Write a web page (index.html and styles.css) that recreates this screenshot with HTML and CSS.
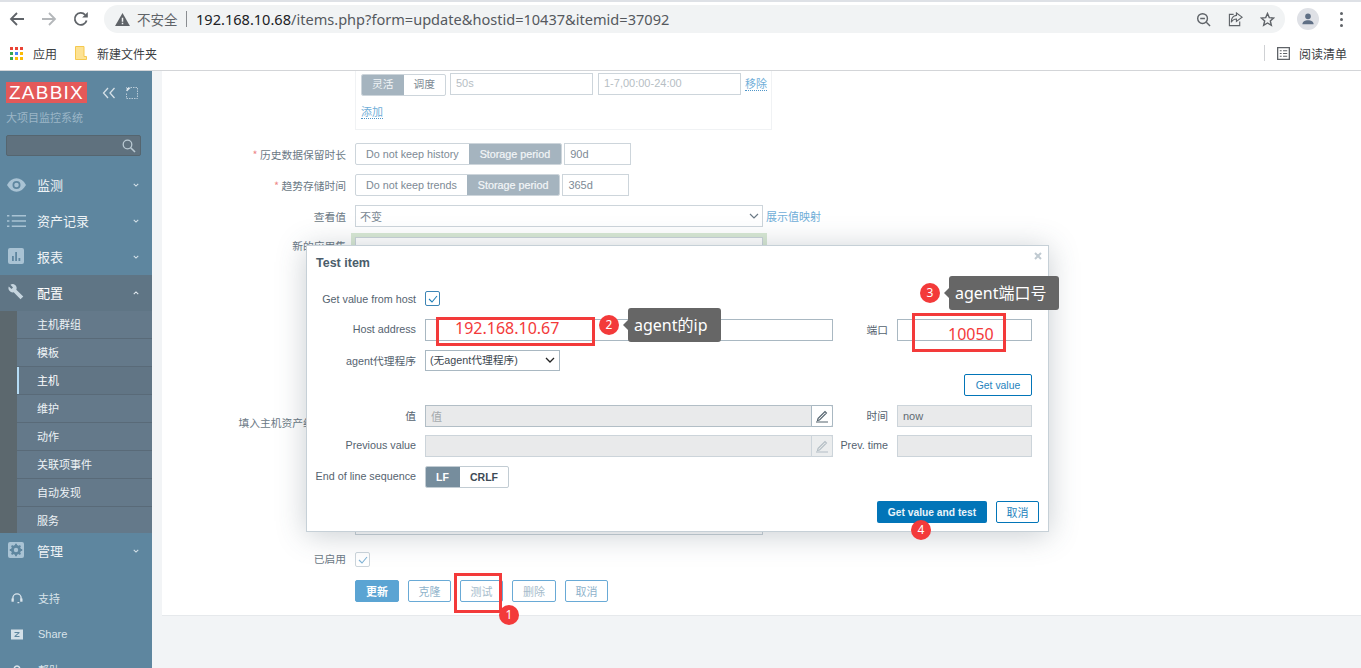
FILE: index.html
```html
<!DOCTYPE html>
<html lang="zh">
<head>
<meta charset="utf-8">
<title>Zabbix</title>
<link rel="stylesheet" href="styles.css">
</head>
<body>
<header class="chrome">
  <div class="toolbar">
    <svg class="nav" viewBox="0 0 16 16"><path d="M15 8H2.5M8 2 2 8l6 6" fill="none" stroke="#5f6368" stroke-width="1.8"/></svg>
    <svg class="nav" viewBox="0 0 16 16"><path d="M1 8h12.5M8 2l6 6-6 6" fill="none" stroke="#b4b7ba" stroke-width="1.8"/></svg>
    <svg class="nav" viewBox="0 0 16 16"><path d="M13.6 9.5A6 6 0 1 1 12.2 3.8" fill="none" stroke="#5f6368" stroke-width="1.8"/><path d="M14.8 1v5.6H9.2z" fill="#5f6368"/></svg>
    <div class="omnibox">
      <svg class="warn" viewBox="0 0 16 14"><path d="M8 0l8 14H0z" fill="#5f6368"/><path d="M7.2 5h1.6v4.4H7.2zM7.2 10.4h1.6V12H7.2z" fill="#f1f3f4"/></svg>
      <span class="insecure">不安全</span>
      <span class="omni-sep"></span>
      <span class="url">192.168.10.68<span class="url-path">/items.php?form=update&amp;hostid=10437&amp;itemid=37092</span></span>
      <div class="omni-icons">
        <svg viewBox="0 0 16 16"><circle cx="7" cy="7" r="5.2" fill="none" stroke="#5f6368" stroke-width="1.5"/><path d="M4.5 7h5M11 11l4 4" stroke="#5f6368" stroke-width="1.5"/></svg>
        <svg viewBox="0 0 16 16"><path d="M9 1l6 4.5L9 10V7.500C6 7.500 4.500 9 3.500 11 3.500 7 5.500 4 9 3.600z" fill="none" stroke="#5f6368" stroke-width="1.2"/><path d="M6 2.500H1.500v12h11V10" fill="none" stroke="#5f6368" stroke-width="1.2"/></svg>
        <svg viewBox="0 0 16 16"><path d="M8 1.600l1.900 4.400 4.700.4-3.600 3.100 1.100 4.700L8 11.700l-4.100 2.500L5 9.500 1.400 6.400l4.700-.4z" fill="none" stroke="#5f6368" stroke-width="1.5"/></svg>
      </div>
    </div>
    <div class="avatar"><svg viewBox="0 0 16 16"><circle cx="8" cy="5" r="3.2" fill="#5f6f85"/><path d="M1.600 14c0-3.200 3-4.600 6.400-4.600s6.400 1.400 6.400 4.600z" fill="#5f6f85"/></svg></div>
    <div class="kebab"><i></i><i></i><i></i></div>
  </div>
  <div class="bookmarks">
    <svg class="apps" viewBox="0 0 13 13">
      <rect width="3" height="3" fill="#ea4335"/><rect x="5" width="3" height="3" fill="#ea4335"/><rect x="10" width="3" height="3" fill="#ea4335"/>
      <rect y="5" width="3" height="3" fill="#34a853"/><rect x="5" y="5" width="3" height="3" fill="#4285f4"/><rect x="10" y="5" width="3" height="3" fill="#fbbc05"/>
      <rect y="10" width="3" height="3" fill="#34a853"/><rect x="5" y="10" width="3" height="3" fill="#fbbc05"/><rect x="10" y="10" width="3" height="3" fill="#fbbc05"/>
    </svg>
    <span class="bm-text">应用</span>
    <svg class="folder" viewBox="0 0 12 14"><path d="M.5.5h8.5v10h2.500v3H.5z" fill="#fde293" stroke="#f5c94f"/></svg>
    <span class="bm-text">新建文件夹</span>
    <span class="bm-spacer"></span>
    <span class="bm-sep"></span>
    <svg class="reading" viewBox="0 0 14 14"><path d="M.7.7h12.600v12.600H.7z" fill="none" stroke="#5f6368" stroke-width="1.400"/><path d="M3 4h2M6.500 4H11M3 7h2M6.500 7H11M3 10h2M6.500 10H11" stroke="#5f6368" stroke-width="1.200"/></svg>
    <span class="bm-text">阅读清单</span>
  </div>
</header>

<div class="app">
  <nav class="sidebar">
    <div class="brand">
      <span class="logo">ZABBIX</span>
      <svg class="brand-ico" viewBox="0 0 14 12"><path d="M6 1 1.500 6 6 11M12.500 1 8 6l4.500 5" fill="none" stroke="#d5e0e7" stroke-width="1.300"/></svg>
      <svg class="brand-ico2" viewBox="0 0 12 12"><path d="M.5 4V.5h11v11H.5V6" fill="none" stroke="#b8cad6" stroke-dasharray="1.500 1"/><path d="M1 1h3.500L1 4.500z" fill="#dce5eb"/></svg>
    </div>
    <div class="brand-sub">大项目监控系统</div>
    <div class="search"><svg viewBox="0 0 14 14"><circle cx="5.500" cy="5.500" r="4.300" fill="none" stroke="#b9c9d3" stroke-width="1.300"/><path d="M8.700 8.700 13 13" stroke="#b9c9d3" stroke-width="1.600"/></svg></div>
    <ul class="menu">
      <li class="mi">
        <svg class="mi-ico" viewBox="0 0 20 14"><path d="M0 7c2.500-4.500 6-7 10-7s7.500 2.500 10 7c-2.500 4.500-6 7-10 7S2.500 11.500 0 7z" fill="#a9c3d4"/><circle cx="10" cy="7" r="4.200" fill="#5e869f"/><circle cx="10" cy="7" r="2.400" fill="#a9c3d4"/></svg>
        <span>监测</span><svg class="chev" viewBox="0 0 8 5"><path d="M1 1l3 3 3-3" fill="none" stroke="#d3e0e8" stroke-width="1.400"/></svg>
      </li>
      <li class="mi">
        <svg class="mi-ico" viewBox="0 0 16 11"><path d="M0 1h2M4 1h12M0 5.500h2M4 5.500h12M0 10h2M4 10h12" stroke="#a9c3d4" stroke-width="1.300"/></svg>
        <span>资产记录</span><svg class="chev" viewBox="0 0 8 5"><path d="M1 1l3 3 3-3" fill="none" stroke="#d3e0e8" stroke-width="1.400"/></svg>
      </li>
      <li class="mi">
        <svg class="mi-ico sq" viewBox="0 0 16 16"><rect width="16" height="16" rx="2" fill="#a9c3d4"/><path d="M4 8h1.800v5H4zM7.200 4h1.800v9H7.200zM10.500 10h1.800v3h-1.800z" fill="#5e869f"/></svg>
        <span>报表</span><svg class="chev" viewBox="0 0 8 5"><path d="M1 1l3 3 3-3" fill="none" stroke="#d3e0e8" stroke-width="1.400"/></svg>
      </li>
      <li class="mi mi-open">
        <svg class="mi-ico sq" viewBox="0 0 16 16"><path d="M6 .3a4.300 4.300 0 0 0-3.600 .5L5 3.500 3.500 5 .8 2.400A4.300 4.300 0 0 0 5.700 8.300l6.800 7 2.800-2.800-7-6.800A4.300 4.300 0 0 0 6 .3z" fill="#c6d5df"/></svg>
        <span>配置</span><svg class="chev" viewBox="0 0 8 5"><path d="M1 4l3-3 3 3" fill="none" stroke="#e2eaef" stroke-width="1.400"/></svg>
      </li>
      <li class="submenu">
        <ul>
          <li>主机群组</li>
          <li>模板</li>
          <li class="cur">主机</li>
          <li>维护</li>
          <li>动作</li>
          <li>关联项事件</li>
          <li>自动发现</li>
          <li>服务</li>
        </ul>
      </li>
      <li class="mi">
        <svg class="mi-ico sq" viewBox="0 0 16 16"><rect width="16" height="16" rx="2" fill="#a9c3d4"/><circle cx="8" cy="8" r="3.600" fill="none" stroke="#5e869f" stroke-width="2.800"/><path d="M8 1.800v2M8 12.200v2M1.800 8h2M12.200 8h2M3.600 3.600 5 5M11 11l1.400 1.400M3.600 12.400 5 11M11 5l1.400-1.400" stroke="#5e869f" stroke-width="1.800"/></svg>
        <span>管理</span><svg class="chev" viewBox="0 0 8 5"><path d="M1 1l3 3 3-3" fill="none" stroke="#d3e0e8" stroke-width="1.400"/></svg>
      </li>
    </ul>
    <ul class="menu-foot">
      <li><svg viewBox="0 0 12 12"><path d="M1.500 7V5.500a4.500 4.500 0 0 1 9 0V7" fill="none" stroke="#dbe5ec" stroke-width="1.500"/><path d="M8.500 10.500h-2" stroke="#dbe5ec" stroke-width="1.300"/><rect x="0" y="6" width="2.500" height="3.500" fill="#dbe5ec"/><rect x="9.500" y="6" width="2.500" height="3.500" fill="#dbe5ec"/></svg><span>支持</span></li>
      <li><svg viewBox="0 0 12 10"><rect width="12" height="10" fill="#d4e0e8"/><path d="M3.500 2.500h5v1L5 6.500h3.500v1h-5v-1l3.500-3h-3.500z" fill="#5e869f"/></svg><span class="latin">Share</span></li>
      <li><svg viewBox="0 0 12 12"><path d="M3 4a3 3 0 1 1 4.500 2.600C6.500 7.200 6 7.800 6 9" fill="none" stroke="#dbe5ec" stroke-width="1.600"/></svg><span>帮助</span></li>
    </ul>
  </nav>

  <main class="content">
    <section class="card">
      <div class="f-row f-row-intervals">
        <div class="f-ctrl">
          <div class="intervals">
            <div class="iv-row">
              <div class="seg seg-iv"><span class="seg-on">灵活</span><span>调度</span></div>
              <span class="inp ph w143">50s</span>
              <span class="inp ph w143 ml5">1-7,00:00-24:00</span>
              <a class="link dotted ml4">移除</a>
            </div>
            <a class="link dotted add">添加</a>
          </div>
        </div>
      </div>
      <div class="f-row h22 mt13">
        <label class="f-label"><em>*</em> 历史数据保留时长</label>
        <div class="f-ctrl flex">
          <div class="seg"><span class="pad-hist">Do not keep history</span><span class="seg-on pad-st">Storage period</span></div>
          <span class="inp w67 ml2">90d</span>
        </div>
      </div>
      <div class="f-row h22 mt9">
        <label class="f-label"><em>*</em> 趋势存储时间</label>
        <div class="f-ctrl flex">
          <div class="seg"><span class="pad-hist">Do not keep trends</span><span class="seg-on pad-st">Storage period</span></div>
          <span class="inp w67 ml2">365d</span>
        </div>
      </div>
      <div class="f-row h22 mt9">
        <label class="f-label">查看值</label>
        <div class="f-ctrl flex">
          <div class="inp select w408">不变<svg viewBox="0 0 10 6"><path d="M1 1l4 4 4-4" fill="none" stroke="#6b7a86" stroke-width="1.200"/></svg></div>
          <a class="link ml3">展示值映射</a>
        </div>
      </div>
      <div class="f-row mt6 apps-row">
        <label class="f-label lbl-app">新的应用集</label>
        <div class="f-ctrl">
          <div class="green-wrap"><div class="app-input"></div></div>
          <label class="f-label lbl-inv">填入主机资产纪录栏位</label>
        </div>
      </div>
      <div class="f-row h15 mt17">
        <label class="f-label lbl-on">已启用</label>
        <div class="f-ctrl"><span class="check"><svg viewBox="0 0 10 8"><path d="M1 4l3 3 5-6" fill="none" stroke="#7fb3d6" stroke-width="1.100"/></svg></span></div>
      </div>
      <div class="f-row h22 mt13">
        <span class="f-label"></span>
        <div class="f-ctrl actions">
          <button class="btn btn-fill">更新</button>
          <button class="btn w43">克隆</button>
          <button class="btn w43 faded">测试</button>
          <button class="btn w44 faded">删除</button>
          <button class="btn w43">取消</button>
        </div>
      </div>
    </section>
  </main>
</div>

<div class="modal">
  <div class="m-head"><h4>Test item</h4><svg viewBox="0 0 8 8"><path d="M1 1l6 6M7 1 1 7" stroke="#c0cad1" stroke-width="2"/></svg></div>
  <div class="m-body">
    <div class="m-row row-first">
      <label>Get value from host</label>
      <span class="m-check"><svg viewBox="0 0 10 8"><path d="M1 4l3 3 5-6" fill="none" stroke="#1f7fb8" stroke-width="1.100"/></svg></span>
    </div>
    <div class="m-row">
      <label>Host address</label>
      <span class="m-inp wide"></span>
      <label class="lab2">端口</label>
      <span class="m-inp side"></span>
    </div>
    <div class="m-row">
      <label>agent代理程序</label>
      <span class="m-select">(无agent代理程序)<svg viewBox="0 0 10 6"><path d="M1 1l4 4 4-4" fill="none" stroke="#222" stroke-width="1.300"/></svg></span>
    </div>
    <div class="m-row row-getvalue">
      <button class="m-btn">Get value</button>
    </div>
    <div class="m-row">
      <label>值</label>
      <span class="m-inp wide dis split"><span class="dis-txt">值</span><span class="pen"><svg viewBox="0 0 14 14"><path d="M3 9.500 10 2.500l1.500 1.500-7 7-2 .5zM1 13h12" fill="none" stroke="#55646f" stroke-width="1.100"/></svg></span></span>
      <label class="lab2">时间</label>
      <span class="m-inp side dis2">now</span>
    </div>
    <div class="m-row row-prev">
      <label>Previous value</label>
      <span class="m-inp wide dis2 split"><span></span><span class="pen pen-off"><svg viewBox="0 0 14 14"><path d="M3 9.500 10 2.500l1.500 1.500-7 7-2 .5zM1 13h12" fill="none" stroke="#b4bec5" stroke-width="1.100"/></svg></span></span>
      <label class="lab2">Prev. time</label>
      <span class="m-inp side dis2"></span>
    </div>
    <div class="m-row">
      <label>End of line sequence</label>
      <div class="m-seg"><b class="m-seg-on">LF</b><b>CRLF</b></div>
    </div>
  </div>
  <div class="m-foot">
    <button class="m-primary">Get value and test</button>
    <button class="m-btn m-cancel">取消</button>
  </div>
</div>

<div class="mark rect-ip"></div>
<div class="mark rect-port"></div>
<div class="mark rect-test"></div>
<span class="red-txt txt-ip">192.168.10.67</span>
<span class="red-txt txt-port">10050</span>
<span class="badge b1">1</span>
<span class="badge b2">2</span>
<span class="badge b3">3</span>
<span class="badge b4">4</span>
<div class="tip tip-ip">agent的ip</div>
<div class="tip tip-port">agent端口号</div>
</body>
</html>
```
FILE: styles.css
```css
* { box-sizing: border-box; }
html, body { margin: 0; height: 668px; overflow: hidden; }
body {
  position: relative;
  width: 1361px;
  background: #fff;
  font-family: "Liberation Sans", "Noto Sans CJK SC", sans-serif;
  font-size: 11px;
  color: #5f6f7b;
}
ul { list-style: none; margin: 0; padding: 0; }
button { font-family: inherit; cursor: pointer; }

/* browser chrome */
.chrome { height: 71px; border-top: 2px solid #dee1e6; border-bottom: 1px solid #d3d5d8; background: #fff; }
.toolbar { height: 34px; display: flex; align-items: center; padding-left: 9px; }
.nav { width: 16px; height: 16px; margin-right: 16px; flex: none; }
.omnibox {
  margin-left: -1px; width: 1181px; height: 28px; border-radius: 14px; background: #f1f3f4;
  display: flex; align-items: center; padding-left: 11px;
  font-family: "Noto Sans", "Noto Sans CJK SC", sans-serif;
}
.warn { width: 15px; height: 13px; margin-right: 7px; flex: none; }
.insecure { font-size: 13.500px; color: #5f6368; width: 41px; white-space: nowrap; }
.omni-sep { width: 1px; height: 16px; background: #8a8d91; margin: 0 9px 0 8px; }
.url { font-size: 14.570px; color: #202124; white-space: nowrap; }
.url-path { color: #55595e; }
.omni-icons { margin-left: auto; display: flex; gap: 17px; padding-right: 10px; }
.omni-icons svg { width: 15px; height: 15px; }
.avatar { width: 22px; height: 22px; border-radius: 50%; background: #dfe1e6; margin-left: 12px; padding: 4px; display: flex; }
.avatar svg { width: 14px; height: 14px; }
.kebab { margin-left: 21px; display: flex; flex-direction: column; gap: 3px; }
.kebab i { width: 3px; height: 3px; border-radius: 50%; background: #5f6368; }
.bookmarks { height: 34px; display: flex; align-items: center; padding-left: 10px; color: #3c4043; }
.apps { width: 13px; height: 13px; margin-right: 10px; }
.bm-text { font-size: 12px; white-space: nowrap; font-family: "Noto Sans CJK SC", sans-serif; }
.folder { width: 12px; height: 14px; margin: 0 10px 0 18px; }
.bm-spacer { flex: 1; }
.bm-sep { width: 1px; height: 16px; background: #cfd1d4; margin-right: 12px; }
.reading { width: 13px; height: 13px; margin-right: 9px; }
.bookmarks > .bm-text:last-child { margin-right: 14px; }

/* layout */
.app { display: flex; height: 597px; overflow: hidden; background: #f2f4f6; }
.sidebar { width: 152px; flex: none; background: #5e869f; color: #fff; overflow: hidden; }
.content { flex: 1; padding-left: 10px; }

/* sidebar */
.brand { display: flex; align-items: center; padding: 11px 0 0 6px; height: 32px; }
.logo { width: 81px; height: 21px; background: #e45959; color: #fff; font-size: 19px; line-height: 21px; text-align: center; letter-spacing: 1.250px; }
.brand-ico { width: 14px; height: 12px; margin-left: 15px; }
.brand-ico2 { width: 12px; height: 12px; margin-left: 10px; }
.brand-sub { margin: 7px 0 0 6px; height: 14px; line-height: 14px; font-size: 11px; color: #9cb6c7; font-family: "Noto Sans CJK SC", sans-serif; }
.search { margin: 11px 0 0 6px; width: 135px; height: 21px; background: #5f717e; border: 1px solid #55656f; border-radius: 2px; display: flex; align-items: center; justify-content: flex-end; padding-right: 4px; }
.search svg { width: 14px; height: 14px; }
.menu { margin-top: 11px; }
.mi { height: 36px; padding-bottom: 2px; display: flex; align-items: center; position: relative; font-size: 13px; color: #eef3f6; font-family: "Noto Sans CJK SC", sans-serif; }
.mi > span { margin-left: 37px; }
.mi-ico { position: absolute; left: 7px; top: 11px; width: 19px; height: 14px; }
.mi-ico.sq { left: 8px; top: 9px; width: 16px; height: 16px; }
.chev { position: absolute; right: 13px; top: 16px; width: 6px; height: 4px; }
.mi-open { background: #5f7585; color: #fff; }
.submenu { background: #5c686e; padding-left: 17px; height: 222px; }
.submenu li { height: 28px; line-height: 27px; padding-left: 20px; background: #64798a; border-bottom: 1px solid #596a78; color: #eef3f6; font-size: 11px; font-family: "Noto Sans CJK SC", sans-serif; }
.submenu li:last-child { height: 26px; border-bottom: 0; }
.submenu li.cur { box-shadow: inset 2px 0 0 #b5dcf5; background: #617585; color: #fff; }
.menu-foot { margin-top: 11px; }
.menu-foot li { height: 36px; display: flex; align-items: center; padding-left: 11px; color: #d8e3ea; font-size: 11px; font-family: "Noto Sans CJK SC", sans-serif; }
.menu-foot svg { width: 12px; height: 11px; margin-right: 15px; flex: none; }
.menu-foot .latin { font-family: "Liberation Sans", sans-serif; }

/* form card */
.card { background: #fff; height: 545px; border-bottom: 1px solid #e6e9ec; }
.f-row { display: flex; align-items: center; }
.f-label { width: 184px; flex: none; text-align: right; color: #6b7985; font-size: 10.750px; white-space: nowrap; font-family: "Noto Sans CJK SC", sans-serif; }
.f-label em { color: #e88; font-style: normal; }
.f-ctrl { margin-left: 9px; }
.f-row-intervals { padding-left: 184px; }
.flex { display: flex; align-items: center; }
.h22 { height: 22px; }
.h15 { height: 15px; }
.mt6 { margin-top: 6px; }
.mt9 { margin-top: 9px; }
.mt13 { margin-top: 13px; }
.mt17 { margin-top: 17px; }
.intervals { width: 417px; height: 59px; border: 1px solid #f0f2f4; border-top: 0; padding: 2px 0 0 5px; }
.iv-row { display: flex; align-items: flex-start; height: 23px; }
.iv-row .inp { line-height: 19px; }
.iv-row .link { margin-top: 3px; }
.seg { display: flex; height: 22px; border: 1px solid #cdd5db; border-radius: 2px; color: #7d8a95; font-size: 10.750px; line-height: 20px; white-space: nowrap; overflow: hidden; background: #fff; }
.seg span { display: block; text-align: center; }
.seg-on { background: #a5b4bf; color: #f3f6f8; }
.seg .seg-on { font-weight: 400; }
.seg-iv { width: 85px; height: 22px; margin-top: 1px; font-family: "Noto Sans CJK SC", sans-serif; margin-right: 4px; }
.seg-iv span { width: 50%; line-height: 18px; }
.pad-hist { padding: 0 10px; }
.pad-st { padding: 0 11px; -webkit-text-stroke: .2px #f3f6f8; }
.inp { display: block; height: 22px; line-height: 20px; border: 1px solid #cdd5db; padding: 0 5px; color: #7d8a95; font-size: 11px; background: #fff; white-space: nowrap; }
.ph { color: #b6bec4; }
.w143 { width: 143px; }
.w67 { width: 67px; }
.w408 { width: 408px; }
.ml2 { margin-left: 2px; }
.ml3 { margin-left: 3px; }
.ml4 { margin-left: 4px; }
.ml5 { margin-left: 5px; }
.select { position: relative; font-family: "Noto Sans CJK SC", sans-serif; padding-left: 4px; }
.select svg { position: absolute; right: 3px; top: 7px; width: 10px; height: 6px; }
.link { color: #70aed8; font-size: 11px; white-space: nowrap; font-family: "Noto Sans CJK SC", sans-serif; }
.dotted { border-bottom: 1px dotted #4f96c8; line-height: 14px; }
.add { display: inline-block; margin-top: 8px; }
.apps-row { align-items: flex-start; position: relative; }
.lbl-app { margin-top: 5px; }
.lbl-on { padding-bottom: 2px; }
.green-wrap { margin-left: -4px; width: 416px; height: 302px; background: linear-gradient(#d8e8d4, #d8e8d4) top / 100% 100px no-repeat; padding: 4px 4px 0; }
.app-input { height: 298px; background: #fff; border: 1px solid #c9d2d8; }
.lbl-inv { position: absolute; left: 0; top: 182px; }
.check { display: block; width: 15px; height: 15px; border: 1px solid #ccd5db; border-radius: 2px; padding: 3px 2px; background: #fff; }
.check svg { display: block; width: 10px; height: 8px; }
.actions { display: flex; gap: 9px; }
.btn { height: 22px; padding: 0; background: #fff; border: 1px solid #69aad6; border-radius: 2px; color: #8fb3cb; font-size: 11px; font-family: "Noto Sans CJK SC", sans-serif; }
.btn-fill { width: 44px; background: #5ba4d3; color: #fff; border-color: #5ba4d3; font-weight: 700; }
.w43 { width: 43px; }
.w44 { width: 44px; }
.faded { color: #a6bccb; }

/* modal */
.modal {
  position: absolute; left: 306px; top: 245px; width: 743px; height: 287px;
  background: #fff; border: 1px solid #c6d0d7;
  box-shadow: 0 3px 28px rgba(60, 80, 95, .28);
  color: #4f5f6c;
}
.m-head { height: 42px; padding: 10px 0 0 9px; position: relative; }
.m-head h4 { margin: 0; font-size: 12.500px; line-height: 14px; font-weight: 700; color: #4b5d6b; }
.m-head svg { position: absolute; right: 6px; top: 6px; width: 8px; height: 8px; }
.m-body { display: flex; flex-direction: column; gap: 9px; }
.m-row { display: flex; align-items: center; height: 22px; }
.m-row > label { width: 109px; flex: none; padding-bottom: 2px; text-align: right; font-size: 10.750px; white-space: nowrap; font-family: "Liberation Sans", "Noto Sans CJK SC", sans-serif; color: #55636f; }
.m-row > label + * { margin-left: 9px; }
.m-row > label.lab2 { width: 55px; margin-left: 0; }
.row-first > label { padding-bottom: 0; }
.m-inp { display: block; height: 22px; border: 1px solid #a9b8c2; line-height: 20px; padding: 0 5px; font-size: 11px; background: #fff; }
.wide { width: 408px; }
.side { width: 135px; }
.dis { background: #e9eaeb; border-color: #b2bec6; color: #a4a9ad; }
.dis2 { background: #e9eaeb; border-color: #ccd4da; color: #5f6a72; }
.split { display: flex; justify-content: space-between; padding: 0 0 0 5px; border-right: 0; }
.dis-txt { font-family: "Noto Sans CJK SC", sans-serif; }
.pen { width: 22px; height: 22px; margin-top: -1px; background: #fff; border: 1px solid #a9b8c2; border-radius: 0 2px 2px 0; padding: 3px; }
.pen-off { background: #ebedee; border-color: #ccd4da; }
.pen svg { display: block; width: 14px; height: 14px; }
.m-check { display: block; width: 15px; height: 15px; margin-top: -1px; border: 1px solid #3d85b5; border-radius: 2px; padding: 3px 2px; }
.m-check svg { display: block; width: 10px; height: 8px; }
.m-select { position: relative; display: block; width: 135px; height: 21px; margin-top: -1px; border: 1px solid #a9b8c2; line-height: 19px; padding-left: 4px; font-size: 10.750px; color: #3c4750; white-space: nowrap; }
.m-select svg { position: absolute; right: 4px; top: 6px; width: 10px; height: 6px; }
.row-getvalue { margin-top: -7px; justify-content: flex-end; padding-right: 16px; }
.row-prev { margin-top: -1px; }
.m-btn { width: 68px; height: 22px; padding: 0; background: #fff; border: 1px solid #0275b8; border-radius: 2px; color: #2583bd; font-size: 10.400px; }
.m-seg { display: flex; height: 22px; border: 1px solid #c2ccd3; border-radius: 2px; overflow: hidden; font-size: 10.500px; line-height: 20px; text-align: center; color: #3d4a54; }
.m-seg b { width: 48px; font-weight: 700; }
.m-seg .m-seg-on { width: 35px; background: #768d9d; color: #fff; margin: -1px 0 -1px -1px; line-height: 22px; }
.m-foot { position: absolute; right: 9px; bottom: 8px; display: flex; gap: 9px; }
.m-primary { width: 110px; height: 22px; padding: 0; background: #0275b8; border: 0; border-radius: 2px; color: #eaf4fa; font-size: 10.250px; font-weight: 700; }
.m-cancel { width: 43px; font-size: 11px; font-family: "Noto Sans CJK SC", sans-serif; }

/* annotations */
.mark { position: absolute; border: 3px solid #f33a3a; }
.rect-ip { left: 436px; top: 317px; width: 159px; height: 29px; }
.rect-port { left: 912px; top: 313px; width: 94px; height: 39px; }
.rect-test { left: 454px; top: 573px; width: 48px; height: 40px; }
.red-txt { position: absolute; color: #f33a3a; font-size: 16px; line-height: 18px; font-family: "Noto Sans", sans-serif; }
.txt-ip { left: 455px; top: 319px; }
.txt-port { left: 948px; top: 325px; }
.badge { position: absolute; width: 20px; height: 20px; border-radius: 50%; background: #f33a3a; color: #fff; font-size: 12px; line-height: 20px; text-align: center; font-family: "Noto Sans", sans-serif; }
.b1 { left: 499px; top: 605px; }
.b2 { left: 599px; top: 315px; }
.b3 { left: 920px; top: 283px; }
.b4 { left: 911px; top: 520px; }
.tip { position: absolute; height: 34px; background: #666; border-radius: 3px; color: #fff; font-size: 16px; line-height: 34px; padding-left: 6px; font-family: "Noto Sans", "Noto Sans CJK SC", sans-serif; white-space: nowrap; }
.tip::before { content: ""; position: absolute; left: -5px; top: 12px; border: 5px solid transparent; border-left: 0; border-right-color: #666; }
.tip-ip { left: 628px; top: 308px; width: 93px; }
.tip-port { left: 949px; top: 276px; width: 110px; }
```
